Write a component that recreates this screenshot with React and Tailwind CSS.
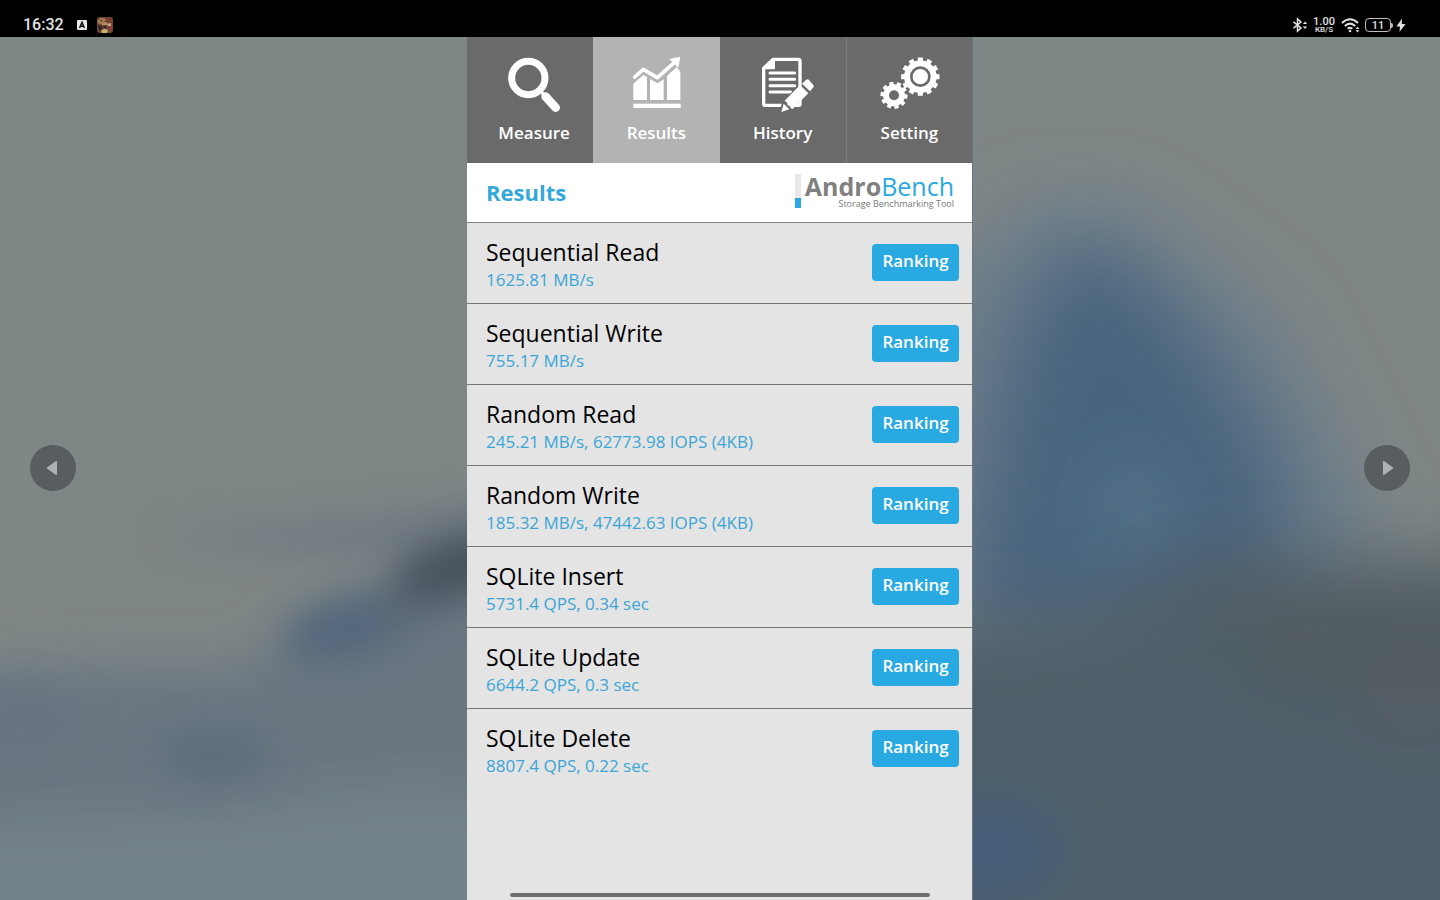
import React from 'react';

const results = [
  ['Sequential Read', '1625.81 MB/s'],
  ['Sequential Write', '755.17 MB/s'],
  ['Random Read', '245.21 MB/s, 62773.98 IOPS (4KB)'],
  ['Random Write', '185.32 MB/s, 47442.63 IOPS (4KB)'],
  ['SQLite Insert', '5731.4 QPS, 0.34 sec'],
  ['SQLite Update', '6644.2 QPS, 0.3 sec'],
  ['SQLite Delete', '8807.4 QPS, 0.22 sec'],
];

function gearPath(cx, cy, outer, inner, teeth, offset) {
  const step = (Math.PI * 2) / teeth;
  const points = [];
  for (let i = 0; i < teeth; i += 1) {
    const a = i * step + offset;
    [
      [-0.3, inner],
      [-0.25, outer],
      [0.25, outer],
      [0.3, inner],
    ].forEach(([t, r]) => {
      points.push(`${(cx + r * Math.cos(a + t * step)).toFixed(1)} ${(cy + r * Math.sin(a + t * step)).toFixed(1)}`);
    });
  }
  return `M${points.join('L')}Z`;
}

function Backdrop() {
  return (
    <svg className="absolute inset-0 h-full w-full" viewBox="0 37 1440 863" preserveAspectRatio="none" aria-hidden="true">
      <defs>
        <filter id="soft" filterUnits="userSpaceOnUse" x="-300" y="-200" width="2100" height="1400">
          <feGaussianBlur stdDeviation="24" />
        </filter>
        <filter id="softer" filterUnits="userSpaceOnUse" x="-300" y="-200" width="2100" height="1400">
          <feGaussianBlur stdDeviation="36" />
        </filter>
        <filter id="tight" filterUnits="userSpaceOnUse" x="-300" y="-200" width="2100" height="1400">
          <feGaussianBlur stdDeviation="18" />
        </filter>
      </defs>
      <rect y="37" width="1440" height="863" fill="#7f8686" />
      <g filter="url(#soft)">
        <path d="M-100 672L120 665L250 665L310 610L480 545L600 520V1000H-100Z" fill="#6b7781" />
        <path d="M-100 830L200 815L400 790L600 800V1000H-100Z" fill="#738189" />
      </g>
      <g filter="url(#tight)">
        <path d="M160 535L300 525L480 505L560 505V560L380 555L250 550Z" fill="#6e7881" />
        <ellipse cx="215" cy="755" rx="55" ry="24" fill="#5c6d7b" />
        <ellipse cx="350" cy="628" rx="66" ry="28" fill="#53667b" transform="rotate(-16 350 628)" />
        <ellipse cx="420" cy="598" rx="50" ry="22" fill="#5a6876" transform="rotate(-25 420 598)" />
        <ellipse cx="475" cy="562" rx="84" ry="31" fill="#47515c" transform="rotate(-14 475 562)" />
        <ellipse cx="20" cy="720" rx="60" ry="30" fill="#687580" />
      </g>
      <g filter="url(#softer)">
        <path d="M930 300L1030 210L1120 210L1270 320L1370 520L1320 640H900Z" fill="#697b8a" />
      </g>
      <g filter="url(#softer)">
        <path d="M970 560L1010 360L1060 255L1110 250L1190 330L1270 450L1290 560L1220 640H970Z" fill="#4a657e" />
        <ellipse cx="1135" cy="510" rx="45" ry="50" fill="#54728a" />
      </g>
      <g filter="url(#softer)">
        <path d="M850 630L1080 615L1200 560L1600 562V1050H850Z" fill="#505f69" />
        <path d="M1180 580L1600 580V690L1280 690Z" fill="#515c60" />
        <ellipse cx="990" cy="850" rx="80" ry="45" fill="#3f5d7a" />
        <ellipse cx="1415" cy="700" rx="40" ry="45" fill="#565b62" />
      </g>
    </svg>
  );
}

function MeasureIcon() {
  return (
    <svg className="size-[60px] overflow-visible" viewBox="114 58 180 180" fill="none" stroke="currentColor" aria-hidden="true">
      <circle cx="187" cy="127" r="50" strokeWidth="21" />
      <path d="M222 165L236 180" strokeWidth="10" />
      <path d="M239 183L269 216" strokeWidth="26" strokeLinecap="round" />
    </svg>
  );
}

function ResultsIcon() {
  return (
    <svg className="size-[60px] overflow-visible" viewBox="480 58 180 180" fill="currentColor" aria-hidden="true">
      <path d="M502 144L532 118L543 124V193H502Z" />
      <path d="M552 130L575 143L593 131V193H552Z" />
      <path d="M603 121L632 94L643 108V193H603Z" />
      <rect x="502" y="204" width="142" height="13" />
      <path d="M506 124L532 101L574 126L628 78" fill="none" stroke="currentColor" strokeWidth="11" strokeLinejoin="round" strokeLinecap="round" />
      <path d="M643 63L637 96L610 70Z" />
    </svg>
  );
}

function HistoryIcon() {
  return (
    <svg className="size-[60px] overflow-visible" viewBox="102 58 180 180" fill="none" stroke="currentColor" aria-hidden="true">
      <path d="M163 71H238Q243 71 243 76V206Q243 209 240 209H138Q134 209 134 205V98Z" strokeWidth="10" strokeLinejoin="round" />
      <path d="M163 70L133 101H164Q168 101 168 97V70Z" fill="currentColor" stroke="none" />
      <path d="M153 112H227M153 131H227M153 150H227M153 169H215" strokeWidth="9" strokeLinecap="round" />
      <path d="M182 222L190 200L236 150L248 170L225 218L200 226Z" fill="#6a6a6a" stroke="none" />
      <path d="M187 229L194 204L211 221Z" fill="currentColor" stroke="none" />
      <path d="M197 195L243 148L268 173L221 220L215 218L213 211L206 209L205 202Z" fill="currentColor" stroke="none" />
      <path d="M249 144L262 132Q266 129 270 133L283 148Q286 152 283 155L273 167Z" fill="currentColor" stroke="none" />
    </svg>
  );
}

function SettingIcon() {
  return (
    <svg className="size-[60px] overflow-visible" viewBox="481 58 180 180" fill="currentColor" aria-hidden="true">
      <path d={gearPath(605, 123, 58, 49, 12, 0)} />
      <circle cx="605" cy="123" r="27" fill="none" stroke="#6a6a6a" strokeWidth="8" />
      <path d={gearPath(526, 179, 41, 33, 10, 0.1)} />
      <circle cx="526" cy="179" r="15" fill="#6a6a6a" />
    </svg>
  );
}

const tabs = [
  { name: 'Measure', Icon: MeasureIcon, look: 'bg-[#6a6a6a] pl-2' },
  { name: 'Results', Icon: ResultsIcon, look: 'bg-[#b3b3b3]' },
  { name: 'History', Icon: HistoryIcon, look: 'bg-[#6a6a6a]' },
  { name: 'Setting', Icon: SettingIcon, look: 'border-l border-[#7c7c7c] bg-[#6a6a6a]' },
];

function StatusBar() {
  return (
    <header className="flex h-[37px] shrink-0 items-end justify-between bg-black pr-[34px] pl-[23px] pb-1 font-['Roboto',sans-serif] text-[#e2e2e2]">
      <div className="flex h-4 items-center">
        <span className="w-[54px] text-base leading-4 font-medium">16:32</span>
        <svg className="mr-[10px] size-[10px]" viewBox="0 0 10 10" aria-hidden="true">
          <rect width="10" height="10" rx="1" fill="#e8e8e8" />
          <path d="M2.6 8L5 2.2L7.4 8M3.6 6.2H6.4" fill="none" stroke="#111" strokeWidth="1.5" />
        </svg>
        <svg className="size-4" viewBox="0 0 16 16" aria-hidden="true">
          <rect width="16" height="16" rx="3" fill="#6f4a35" />
          <path d="M0 4L4 1L9 2L7 5L2 7Z" fill="#a9825a" />
          <path d="M8 1L14 1L15 6L11 5Z" fill="#7b3a2b" />
          <path d="M4 6L8 5L11 6L10 8L5 8Z" fill="#b58a62" />
          <path d="M10 7L14 6L14 9L11 9Z" fill="#c9a57c" />
          <path d="M1 8L5 9L6 13L2 14Z" fill="#2f2224" />
          <path d="M6 9L9 9L10 11L7 11Z" fill="#3b2326" />
          <path d="M11 10L15 9V14L12 14Z" fill="#8c3a3c" />
          <path d="M4 13L8 12L11 13L10 16H5Z" fill="#c5b26a" />
          <path d="M3 3L6 3L4 5Z" fill="#4a2c22" />
        </svg>
      </div>
      <div className="flex h-4 items-center">
        <svg className="mr-[5px] h-4 w-4" viewBox="0 0 16 16" fill="none" stroke="currentColor" strokeWidth="1.500" aria-hidden="true">
          <path d="M1.500 4.800L9 11L5.500 14V2L9 5L1.500 11.200" />
          <path d="M10.800 7L13 4.500L15.200 7ZM10.800 9.500L13 12L15.200 9.500Z" fill="currentColor" stroke="none" />
        </svg>
        <div className="mr-[6px] w-[22px] text-center">
          <div className="text-[11px] leading-[9px] font-medium">1.00</div>
          <div className="text-[8px] leading-[8px] font-medium">KB/S</div>
        </div>
        <svg className="mr-[5px] h-4 w-[19px]" viewBox="0 0 19 16" fill="none" stroke="currentColor" strokeWidth="2" aria-hidden="true">
          <path d="M1 6Q9 -1.500 17 6M3.800 9Q9 4.200 14.200 9M6.600 11.800Q9 9.800 11.400 11.800" />
          <circle cx="9" cy="14" r="1.300" fill="currentColor" stroke="none" />
          <path d="M14.500 12L16.500 9.700L18.500 12ZM14.500 13.300L16.500 15.600L18.500 13.300Z" fill="currentColor" stroke="none" />
        </svg>
        <div className="flex h-[14px] w-[26px] items-center justify-center rounded-[4px] border border-[#bdbdbd] text-[11px] leading-none font-medium">11</div>
        <div className="mr-[3px] h-[5px] w-[2px] rounded-r bg-[#bdbdbd]" />
        <svg className="h-[15px] w-[10px]" viewBox="0 0 10 15" fill="currentColor" aria-hidden="true">
          <path d="M6 0.500L0.500 8.500H4L3.500 14L9.500 6H5.800Z" />
        </svg>
      </div>
    </header>
  );
}

function SideButton({ label, flip }) {
  return (
    <button type="button" aria-label={label} className="flex size-[46px] items-center justify-center rounded-full bg-[#585e60] text-[#aeb2b4]">
      <svg className={flip ? 'size-[14px] rotate-180' : 'size-[14px]'} viewBox="0 0 14 14" fill="currentColor" aria-hidden="true">
        <path d="M1.300 6.200L9.600 0.300Q11 -0.500 11 1V13Q11 14.500 9.600 13.700L1.300 7.800Q0.200 7 1.300 6.200Z" />
      </svg>
    </button>
  );
}

function Logo() {
  return (
    <div className="flex items-start gap-1 pb-[2px]">
      <div className="flex h-[34px] w-[6px] flex-col bg-[#e8e8e8]">
        <div className="mt-auto h-[10px] bg-[#29a9e1]" />
      </div>
      <div className="flex flex-col items-end">
        <div className="text-[25px] leading-6 text-[#29a9e1]">
          <span className="font-bold text-[#808080]">Andro</span>Bench
        </div>
        <div className="text-[9px] leading-3 text-[#777777]">Storage Benchmarking Tool</div>
      </div>
    </div>
  );
}

export default function App() {
  return (
    <div className="flex min-h-screen flex-col bg-black font-['Open_Sans','Noto_Sans',sans-serif]">
      <StatusBar />
      <div className="relative flex flex-1">
        <Backdrop />
        <aside className="relative flex flex-1 items-center pb-[2px] pl-[30px]">
          <SideButton label="Move left" />
        </aside>
        <main className="relative flex w-[506px] max-w-full flex-col border-r border-[#687782] bg-[#e4e4e4]">
          <nav className="grid h-[126px] grid-cols-4 text-white">
            {tabs.map(({ name, Icon, look }) => (
              <button key={name} type="button" className={`flex flex-col items-center pt-[18px] ${look}`}>
                <Icon />
                <span className="mt-1 text-[17px] leading-7 font-semibold">{name}</span>
              </button>
            ))}
          </nav>
          <div className="flex h-[60px] items-center justify-between border-b border-[#848484] bg-white pr-[18px] pl-[19px]">
            <h1 className="text-[22px] font-bold text-[#35a8da]">Results</h1>
            <Logo />
          </div>
          <ul>
            {results.map(([title, value]) => (
              <li key={title} className="flex h-[81px] items-center justify-between border-b border-[#777777] pr-[13px] pb-[2px] pl-[19px] last:border-transparent">
                <div className="pt-1">
                  <h2 className="text-[23px] leading-8 text-black">{title}</h2>
                  <p className="text-[17px] leading-6 text-[#3ba6d6]">{value}</p>
                </div>
                <button type="button" className="h-[37px] w-[87px] rounded-[4px] bg-[#29a9e1] pb-[2px] text-[17px] font-semibold text-white">
                  Ranking
                </button>
              </li>
            ))}
          </ul>
          <div className="mx-auto mt-auto mb-[3px] h-1 w-[420px] max-w-full rounded-full bg-[#6e6e6e]" />
        </main>
        <aside className="relative flex flex-1 items-center justify-end pr-[30px] pb-[2px]">
          <SideButton label="Move right" flip />
        </aside>
      </div>
    </div>
  );
}
